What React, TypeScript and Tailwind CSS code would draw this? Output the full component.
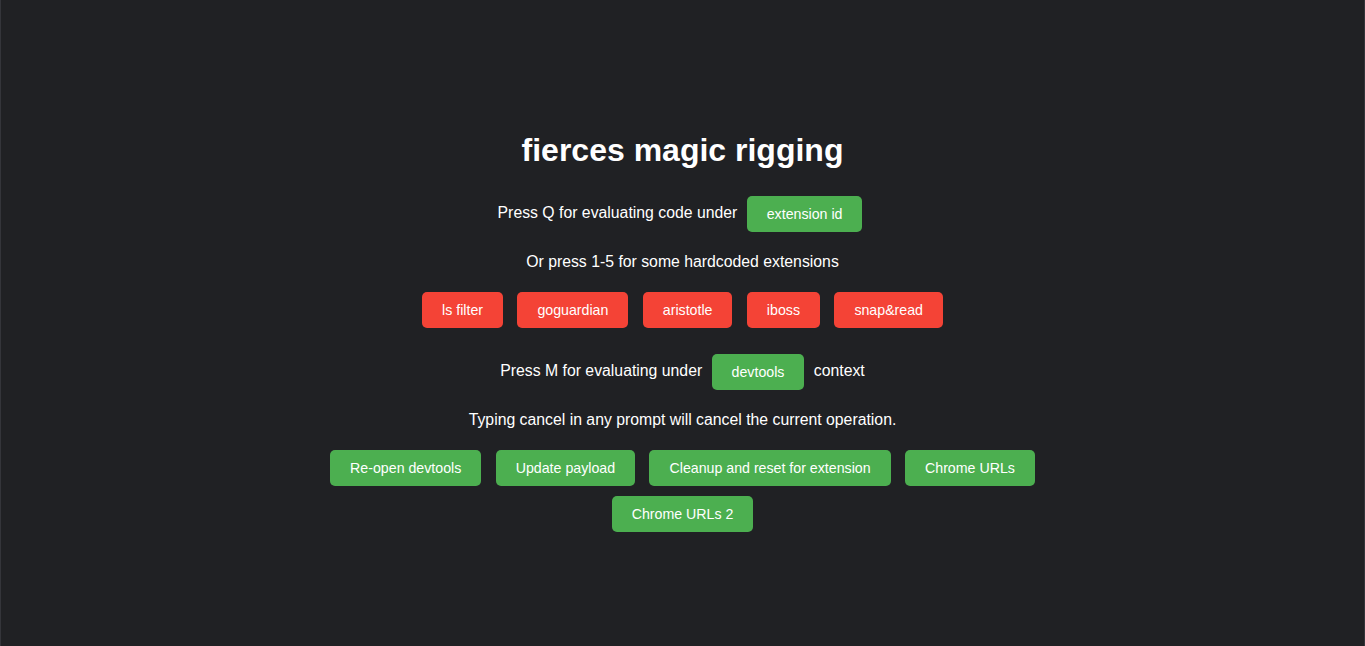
import React from 'react';

const green = 'inline-block m-[5px] px-5 py-2.5 rounded-[5px] bg-[#4caf50] text-white text-[14.2px] leading-4 align-middle';
const red = 'inline-block m-[5px] px-5 py-2.5 rounded-[5px] bg-[#f44336] text-white text-[14.2px] leading-4 align-middle';

export default function App() {
  const hardcoded = ['ls filter', 'goguardian', 'aristotle', 'iboss', 'snap&read'];
  const actions = ['Re-open devtools', 'Update payload', 'Cleanup and reset for extension', 'Chrome URLs', 'Chrome URLs 2'];

  return (
    <div
      className="min-h-screen pt-[18px] flex items-center justify-center bg-[#202124] text-white border-x border-[#34353a]"
      style={{ fontFamily: '"Liberation Sans", Arial, sans-serif' }}
    >
      <div className="text-center text-[15.8px] leading-[18.4px]">
        <h1 className="my-[21.44px] text-[32px] leading-[37px] font-bold">fierces magic rigging</h1>

        <p className="my-4">
          Press Q for evaluating code under <button className={green}>extension id</button>
        </p>

        <p className="my-4">Or press 1-5 for some hardcoded extensions</p>

        <div className="my-4">
          {hardcoded.map((name, i) => (
            <React.Fragment key={name}>
              {i > 0 && ' '}
              <button className={red}>{name}</button>
            </React.Fragment>
          ))}
        </div>

        <p className="my-4">
          Press M for evaluating under <button className={green}>devtools</button> context
        </p>

        <p className="my-4">Typing cancel in any prompt will cancel the current operation.</p>

        <div className="my-4 max-w-[750px] mx-auto">
          {actions.map((name, i) => (
            <React.Fragment key={name}>
              {i > 0 && ' '}
              <button className={green}>{name}</button>
            </React.Fragment>
          ))}
        </div>
      </div>
    </div>
  );
}
